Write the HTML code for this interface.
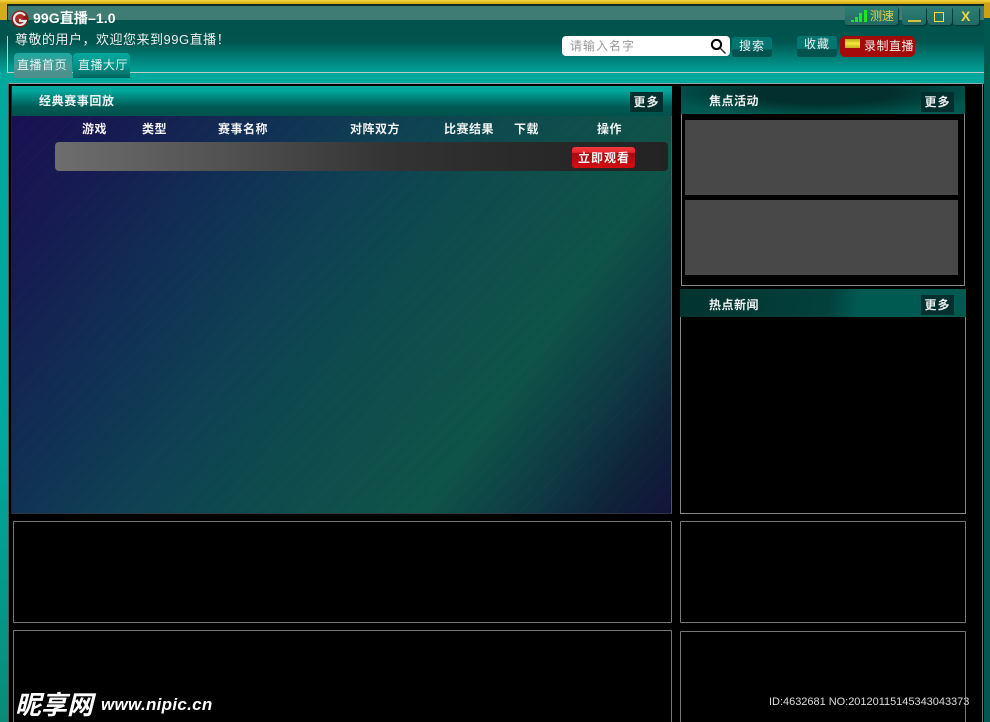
<!DOCTYPE html>
<html><head><meta charset="utf-8"><style>
html,body{margin:0;padding:0;background:#000}
#p{position:relative;width:990px;height:722px;overflow:hidden;background:#000;font-family:"Liberation Sans","WenQuanYi Zen Hei","Noto Sans CJK SC",sans-serif;color:#fff}
#p div{position:absolute;box-sizing:border-box}
.t{white-space:nowrap;line-height:16px}
.h{font-size:12px;font-weight:bold;letter-spacing:.5px;color:#f2f2f2;white-space:nowrap;line-height:16px;font-family:"Liberation Sans","Noto Sans CJK SC",sans-serif}
.m{background:#03302e;width:33px;height:20px;text-align:center;font-size:12px;line-height:20px;font-weight:bold;letter-spacing:1px;color:#eee;font-family:"Liberation Sans","Noto Sans CJK SC",sans-serif}
.b{border:1px solid #777;border-radius:1px;background:#000}
.g{background:#484848}
.btn{background:linear-gradient(#027570 0,#027570 62%,#02524e 62%,#02524e 100%);border-radius:3px;font-size:12px;text-align:center;color:#eee;letter-spacing:1px}
.w{background:linear-gradient(#2f7f76,#1f6a63);border-radius:3px;box-shadow:1px 1px 1px #033}
</style></head><body><div id="p">
<div style="left:0;top:84px;width:8px;height:638px;background:linear-gradient(#00a89e 0,#00a89e 55%,#0a8b78 100%)"></div>
<div style="left:984px;top:18px;width:6px;height:704px;background:#00584f"></div>
<div style="left:0;top:20px;width:984px;height:64px;background:linear-gradient(#00534d 0,#00554f 34%,#00a79d 84%,#00a79d 100%)"></div>
<div style="left:0;top:0;width:990px;height:4px;background:linear-gradient(#f4d640,#d3a510)"></div>
<div style="left:0;top:3px;width:7px;height:17px;background:#d8ab1c"></div>
<div style="left:984px;top:3px;width:6px;height:15px;background:#cfa015"></div>
<div style="left:7px;top:4px;width:977px;height:2px;background:#0c2a28"></div>
<div style="left:7px;top:4px;width:2px;height:17px;background:#0c2a28"></div>
<div style="left:8px;top:6px;width:976px;height:14px;background:#3f7c73"></div>

<svg style="position:absolute;left:11px;top:10px" width="18" height="18" viewBox="0 0 18 18"><circle cx="9" cy="9" r="8.5" fill="#8f1712"/><circle cx="7.5" cy="6.5" r="5" fill="#c83a34" opacity=".6"/><path d="M14 5.6A6 6 0 1 0 14.6 11H9V8.8" fill="none" stroke="#e6e6e6" stroke-width="2.2"/></svg>
<div class="t" style="left:33px;top:10px;font-size:14px;font-weight:bold;letter-spacing:.1px;font-family:'Liberation Sans','Noto Sans CJK SC',sans-serif">99G直播–1.0</div>
<div class="t" style="left:15px;top:32px;font-size:13px;color:#eee;letter-spacing:.5px">尊敬的用户，欢迎您来到99G直播！</div>

<div style="left:7px;top:36px;width:1px;height:37px;background:#b8cfcc"></div>
<div style="left:7px;top:72px;width:977px;height:1px;background:#b9c9c6"></div>
<div style="left:14px;top:53px;width:58px;height:25px;border-radius:4px 4px 0 0;background:linear-gradient(#19a9a0,#4b9a96 50%,#4f8e8c)"></div>
<div class="t" style="left:17px;top:57px;font-size:12px;color:#e8f2f0;letter-spacing:.5px">直播首页</div>
<div style="left:73px;top:53px;width:57px;height:25px;border-radius:4px 4px 0 0;background:linear-gradient(#00a79d,#009389 55%,#00635f)"></div>
<div class="t" style="left:78px;top:57px;font-size:12px;color:#e8f2f0;letter-spacing:.5px">直播大厅</div>

<div style="left:562px;top:36px;width:168px;height:20px;background:#fff;border-radius:4px"></div>
<div class="t" style="left:570px;top:38px;font-size:12px;color:#999;letter-spacing:1px">请输入名字</div>
<svg style="position:absolute;left:710px;top:38px" width="17" height="16" viewBox="0 0 17 16"><circle cx="6.5" cy="6.5" r="4.6" fill="none" stroke="#000" stroke-width="2"/><path d="M10 10l5.5 5.5" stroke="#333" stroke-width="1.5"/></svg>
<div class="btn" style="left:732px;top:37px;width:40px;height:20px;line-height:19px">搜索</div>
<div class="btn" style="left:797px;top:36px;width:40px;height:21px;line-height:16px">收藏</div>
<div style="left:840px;top:36px;width:75px;height:21px;background:#a30b0b;border-radius:5px"></div>
<div style="left:845px;top:39px;width:15px;height:9px;background:linear-gradient(#b8a818,#f4e838,#c8b020)"></div>
<div class="t" style="left:864px;top:38px;font-size:12px;color:#eee;letter-spacing:.5px">录制直播</div>

<div class="w" style="left:845px;top:6px;width:53px;height:19px"></div>
<div style="left:851px;top:20px;width:3px;height:2px;background:#1ce81c"></div>
<div style="left:855px;top:17px;width:3px;height:5px;background:#1ce81c"></div>
<div style="left:859px;top:13px;width:3px;height:9px;background:#1ce81c"></div>
<div style="left:864px;top:10px;width:3px;height:12px;background:#1ce81c"></div>
<div class="t" style="left:870px;top:8px;font-size:12px;color:#e3cf4a">测速</div>
<div class="w" style="left:902px;top:6px;width:24px;height:19px"></div>
<div style="left:908px;top:20px;width:13px;height:2px;background:#d8c23c"></div>
<div class="w" style="left:928px;top:6px;width:24px;height:19px"></div>
<div style="left:934px;top:12px;width:10px;height:10px;border:1px solid #f5dc40"></div>
<div class="w" style="left:953px;top:6px;width:26px;height:19px"></div>
<div class="t" style="left:961px;top:8px;font-size:14px;font-weight:bold;color:#f0d840">X</div>

<!-- main -->
<div style="left:8px;top:83px;width:975px;height:639px;background:#000;border-top:1px solid #8aa;border-right:1px solid #777;border-left:1px solid #555"></div>
<div style="left:11px;top:86px;width:661px;height:428px;border-right:1px solid #4a5a60;border-bottom:1px solid #334;border-left:1px solid #223;background:repeating-linear-gradient(135deg,rgba(255,255,255,.012) 0 1px,transparent 1px 5px,rgba(0,0,0,.03) 5px 6px,transparent 6px 11px),linear-gradient(125deg,#1b0e52 0,#161c52 15%,#112e54 28%,#0f3e54 40%,#0e4a4e 54%,#0e5448 74%,#0f3a44 85%,#0f2238 93%,#13133a 100%)"></div>
<div style="left:12px;top:86px;width:660px;height:30px;background:linear-gradient(#00a89e 0,#00a89e 15%,#005a54 70%,#00524c 100%)"></div>
<div class="h" style="left:39px;top:93px;letter-spacing:.6px">经典赛事回放</div>
<div class="m" style="left:630px;top:92px">更多</div>
<div class="h" style="left:82px;top:121px">游戏</div>
<div class="h" style="left:142px;top:121px">类型</div>
<div class="h" style="left:218px;top:121px">赛事名称</div>
<div class="h" style="left:350px;top:121px">对阵双方</div>
<div class="h" style="left:444px;top:121px">比赛结果</div>
<div class="h" style="left:514px;top:121px">下载</div>
<div class="h" style="left:597px;top:121px">操作</div>
<div style="left:55px;top:142px;width:613px;height:29px;border-radius:4px;background:linear-gradient(90deg,#6e6e6e 0,#4f4f4f 30%,#333 55%,#282828 80%,#232323 100%)"></div>
<div style="left:572px;top:147px;width:63px;height:21px;border-radius:3px;background:linear-gradient(#f03a40 0,#e8262c 25%,#a80a10 30%,#d30d12 100%)"></div>
<div class="h" style="left:578px;top:150px;letter-spacing:1px">立即观看</div>

<!-- focus -->
<div style="left:681px;top:86px;width:284px;height:28px;background:radial-gradient(ellipse 55% 85% at 50% 25%,#02302e 45%,rgba(2,48,46,0) 100%),linear-gradient(#00504a,#005a52)"></div>
<div class="h" style="left:709px;top:93px">焦点活动</div>
<div class="m" style="left:921px;top:92px">更多</div>
<div style="left:681px;top:114px;width:284px;height:172px;border:1px solid #888;border-top:0;background:#000"></div>
<div class="g" style="left:685px;top:120px;width:273px;height:75px"></div>
<div class="g" style="left:685px;top:200px;width:273px;height:75px"></div>

<!-- news -->
<div style="left:680px;top:289px;width:286px;height:28px;background:linear-gradient(100deg,#02332f 0,#03403c 52%,#005a52 62%,#005a52 100%)"></div>
<div class="h" style="left:709px;top:297px">热点新闻</div>
<div class="m" style="left:921px;top:295px">更多</div>
<div style="left:680px;top:317px;width:286px;height:197px;border:1px solid #888;border-top:0;background:#000"></div>

<div class="b" style="left:13px;top:521px;width:659px;height:102px"></div>
<div class="b" style="left:680px;top:521px;width:286px;height:102px"></div>
<div class="b" style="left:13px;top:630px;width:659px;height:100px"></div>
<div class="b" style="left:680px;top:631px;width:286px;height:100px"></div>

<div class="t" style="left:15px;top:689px;font-size:26px;line-height:30px;font-weight:bold;font-style:italic;font-family:'Noto Sans CJK SC',sans-serif">昵享网</div>
<div class="t" style="left:101px;top:695px;font-size:17px;line-height:20px;font-weight:bold;font-style:italic;letter-spacing:.3px">www.nipic.cn</div>
<div class="t" style="left:769px;top:694px;font-size:11px;color:#ddd;letter-spacing:-.02px">ID:4632681 NO:20120115145343043373</div>
</div></body></html>
